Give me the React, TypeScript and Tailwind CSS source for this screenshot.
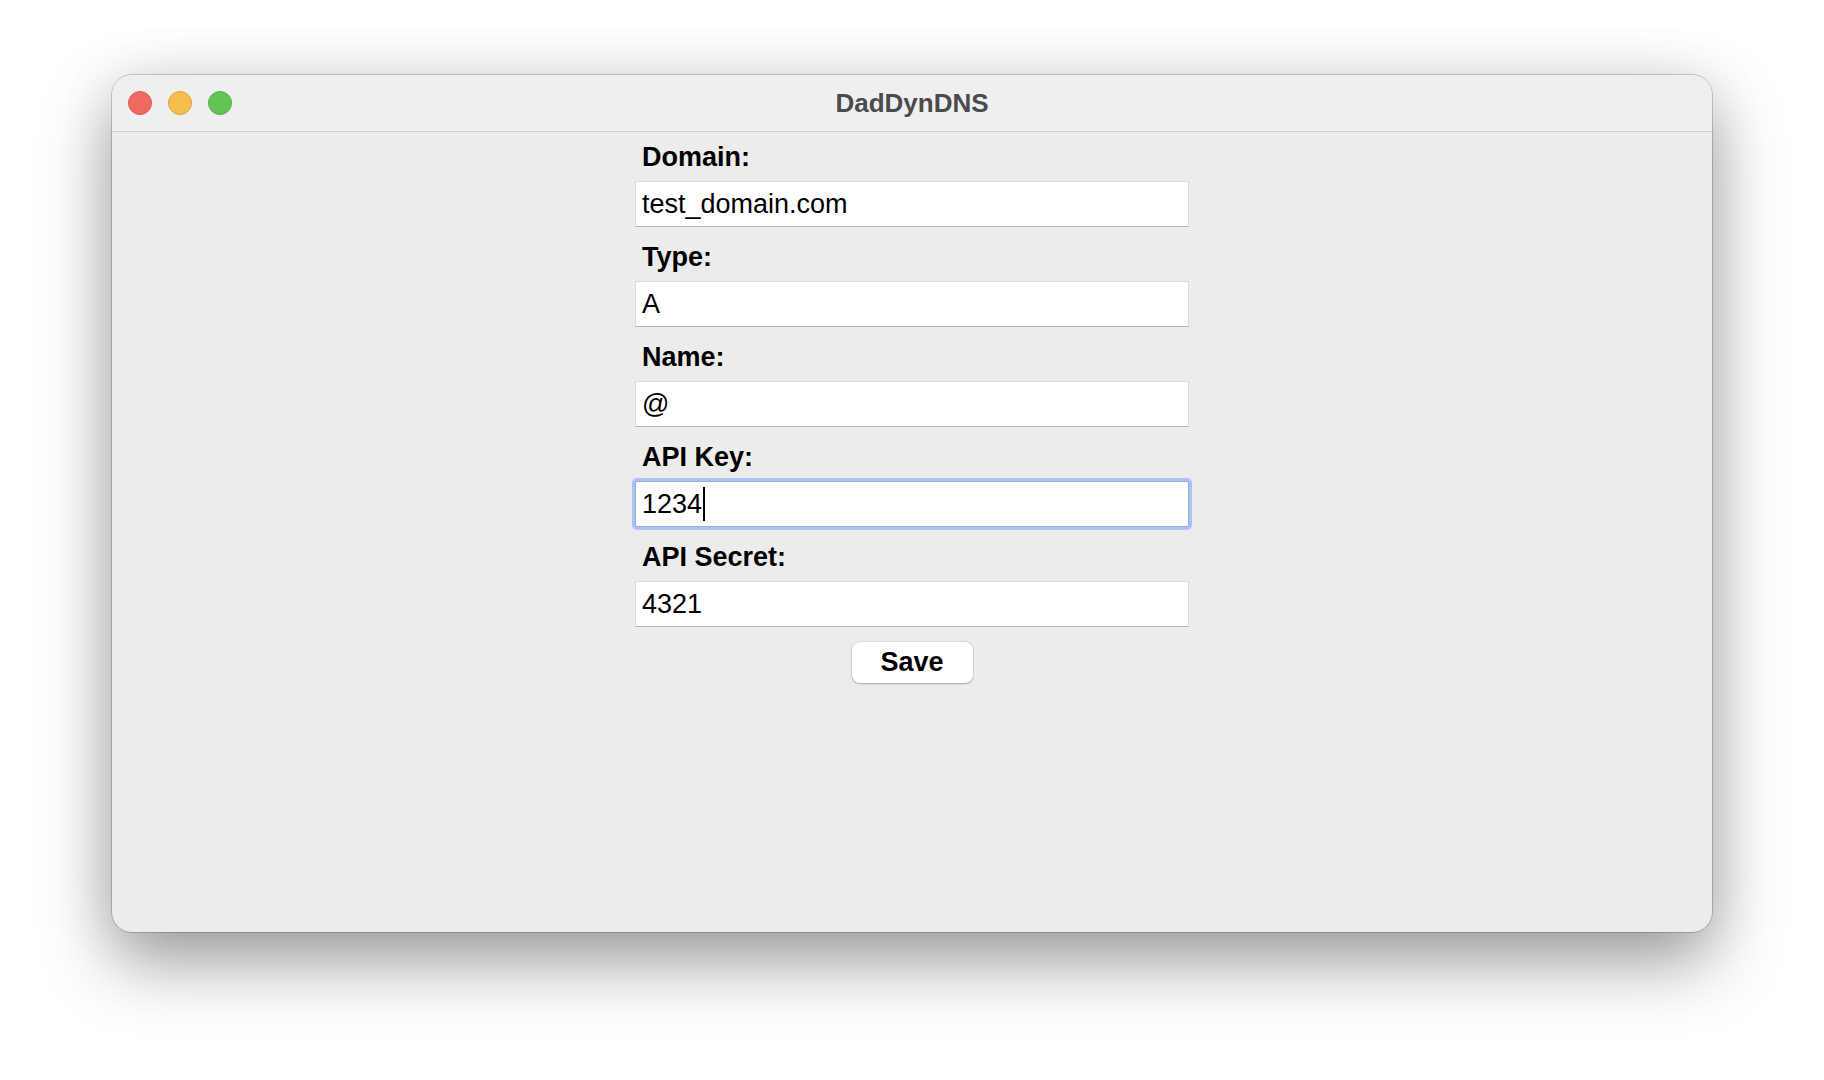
const fields = [
  { label: "Domain:", value: "test_domain.com" },
  { label: "Type:", value: "A" },
  { label: "Name:", value: "@" },
  { label: "API Key:", value: "1234", focused: true },
  { label: "API Secret:", value: "4321" },
];

function Field({ label, value, focused }: { label: string; value: string; focused?: boolean }) {
  return (
    <div className="flex flex-col">
      <div className="h-[28px] leading-[28px] mb-[10px] pl-[7px] text-[27px] font-bold text-black">{label}</div>
      {focused ? (
        <div className="h-[46px] flex items-center pl-[6px] bg-white border border-[#8fb0e6] rounded-[2px] shadow-[0_0_0_3px_#a9c6f1] text-[27px] text-black">
          <span>{value}</span>
          <span className="ml-[1px] w-[2px] h-[34px] bg-black" />
        </div>
      ) : (
        <div className="h-[46px] flex items-center pl-[6px] bg-white border border-[#dadada] border-b-[#b4b4b4] text-[27px] text-black">
          {value}
        </div>
      )}
    </div>
  );
}

export default function App() {
  return (
    <div
      className="min-h-screen bg-white pt-[75px] pl-[112px]"
      style={{ fontFamily: '"Liberation Sans", Arial, sans-serif' }}
    >
      <div className="w-[1600px] h-[857px] rounded-[20px] overflow-hidden bg-[#ececec] flex flex-col shadow-[0_0_0_1px_rgba(0,0,0,0.18),0_30px_70px_rgba(0,0,0,0.38),0_0_60px_rgba(0,0,0,0.08)]">
        <div className="h-[57px] shrink-0 grid grid-cols-[1fr_auto_1fr] items-center bg-[#efeff1] border-b border-[#d2d2d2]">
          <div className="flex items-center gap-[16px] pl-[16px]">
            <span className="w-[24px] h-[24px] rounded-full bg-[#ee6a5f] border border-[#d65a50]" />
            <span className="w-[24px] h-[24px] rounded-full bg-[#f5be4f] border border-[#d9a33e]" />
            <span className="w-[24px] h-[24px] rounded-full bg-[#61c554] border border-[#52ad46]" />
          </div>
          <div className="text-[26px] font-bold text-[#4b4b4b]">DadDynDNS</div>
          <div />
        </div>
        <div className="mx-auto w-[554px] pt-[11px] flex flex-col">
          <div className="flex flex-col gap-[16px]">
            {fields.map((f) => (
              <Field key={f.label} label={f.label} value={f.value} focused={f.focused} />
            ))}
          </div>
          <div className="flex justify-center mt-[15px]">
            <button className="w-[121px] h-[41px] rounded-[8px] bg-white text-[27px] font-bold text-black shadow-[0_0_0_0.5px_rgba(0,0,0,0.12),0_1px_2px_rgba(0,0,0,0.25)]">
              Save
            </button>
          </div>
        </div>
      </div>
    </div>
  );
}
